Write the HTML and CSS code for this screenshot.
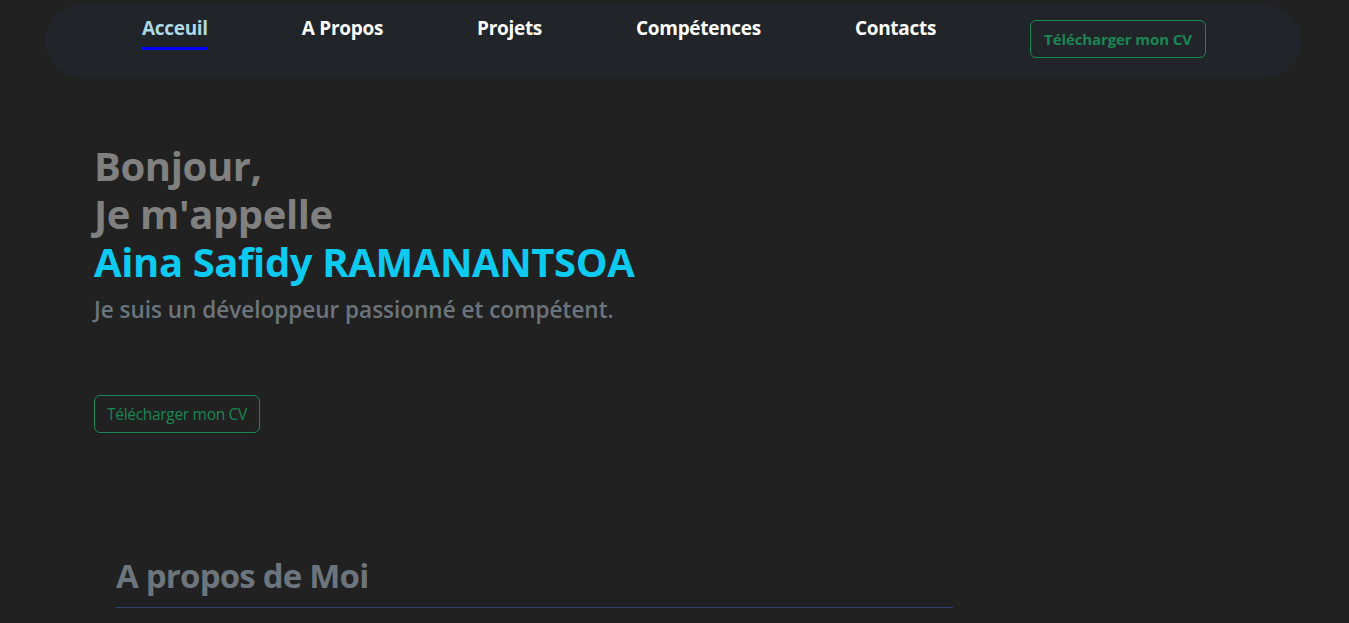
FILE: index.html
```html
<!DOCTYPE html>
<html lang="fr">
<head>
<meta charset="utf-8">
<title>Aina Safidy RAMANANTSOA</title>
<link rel="stylesheet" href="styles.css">
</head>
<body>
<nav class="navbar">
  <ul class="nav-list">
    <li><a class="nav-link active" href="#">Acceuil</a></li>
    <li><a class="nav-link" href="#">A Propos</a></li>
    <li><a class="nav-link" href="#">Projets</a></li>
    <li><a class="nav-link" href="#">Compétences</a></li>
    <li><a class="nav-link" href="#">Contacts</a></li>
    <li><a class="btn btn-nav" href="#">Télécharger mon CV</a></li>
  </ul>
</nav>
<section class="hero">
  <h1 class="hero-title">
    <span class="greet">Bonjour,</span>
    <span class="greet">Je m'appelle</span>
    <span class="name">Aina Safidy RAMANANTSOA</span>
  </h1>
  <p class="hero-sub">Je suis un développeur passionné et compétent.</p>
  <a class="btn btn-hero" href="#">Télécharger mon CV</a>
</section>
<section class="about">
  <h2 class="about-title">A propos de Moi</h2>
  <hr class="about-rule">
</section>
</body>
</html>
```
FILE: styles.css
```css
* { box-sizing: border-box; }
html, body { margin: 0; padding: 0; }
body {
  background: #212121;
  font-family: "Open Sans", "Noto Sans", sans-serif;
  color: #fff;
  overflow: hidden;
  height: 623px;
}
a { text-decoration: none; }
.navbar {
  margin: 4px 48px 0 45px;
  height: 74px;
  background: #212529;
  border-radius: 40px;
  padding: 0 0 0 97px;
}
.nav-list {
  list-style: none;
  margin: 0;
  padding: 0;
  display: flex;
  gap: 94px;
  align-items: flex-start;
}
.nav-link {
  display: block;
  color: #fff;
  font-weight: 700;
  font-size: 19px;
  letter-spacing: -0.3px;
  line-height: 24px;
  padding-top: 12px;
  padding-bottom: 7px;
  border-bottom: 3px solid transparent;
}
.nav-link.active {
  color: #add8e6;
  border-bottom-color: #0000ff;
}
.btn {
  display: inline-block;
  border: 1px solid #198754;
  color: #198754;
  border-radius: 6px;
  background: transparent;
}
.btn-nav {
  display: block;
  margin-top: 16px;
  height: 38px;
  padding: 0 13px;
  line-height: 36px;
  font-size: 15px;
  font-weight: 700;
  letter-spacing: -0.1px;
}
.hero {
  padding: 64px 0 0 94px;
}
.hero-title {
  margin: 0 0 8px;
  font-size: 40px;
  line-height: 48px;
  font-weight: 700;
  letter-spacing: -0.4px;
}
.hero-title span { display: block; }
.greet { color: #808080; }
.name { color: #0dcaf0; }
.hero-sub {
  margin: 0;
  color: #6c757d;
  font-size: 22.5px;
  font-weight: 600;
  line-height: 31px;
}
.btn-hero {
  margin-top: 70px;
  height: 38px;
  padding: 0 12px;
  line-height: 36px;
  font-size: 15.5px;
  font-weight: 400;
  letter-spacing: -0.3px;
}
.about {
  padding: 123px 0 0 116px;
  width: 953px;
}
.about-title {
  margin: 0;
  color: #6c757d;
  font-size: 33px;
  font-weight: 700;
  line-height: 40px;
  letter-spacing: -0.8px;
}
.about-rule {
  margin: 11px 0 0;
  border: 0;
  border-top: 1px solid #2a4470;
}
```
